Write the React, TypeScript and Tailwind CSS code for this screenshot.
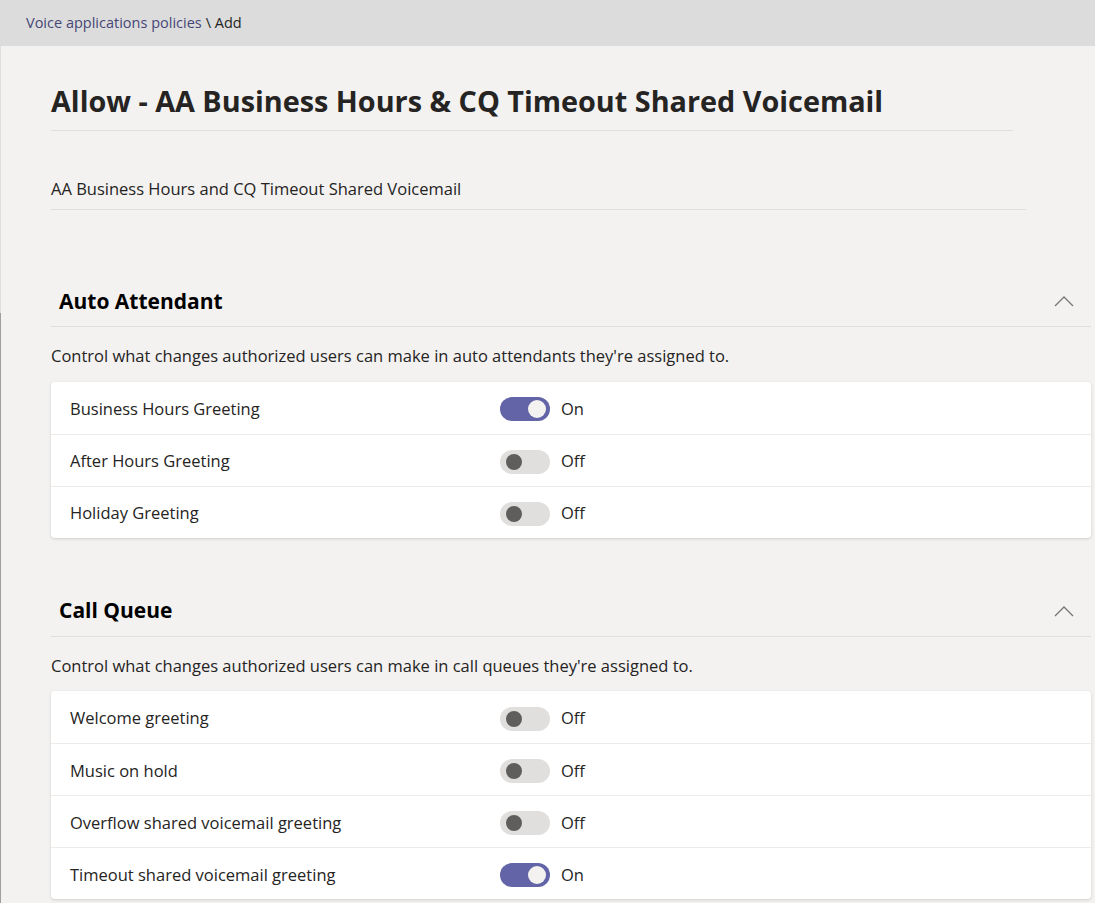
type Setting = { label: string; on: boolean };

const autoAttendant: Setting[] = [
  { label: "Business Hours Greeting", on: true },
  { label: "After Hours Greeting", on: false },
  { label: "Holiday Greeting", on: false },
];

const callQueue: Setting[] = [
  { label: "Welcome greeting", on: false },
  { label: "Music on hold", on: false },
  { label: "Overflow shared voicemail greeting", on: false },
  { label: "Timeout shared voicemail greeting", on: true },
];

function Chevron() {
  return (
    <svg width="20" height="11" viewBox="0 0 20 11" fill="none" className="text-[#797775]">
      <path d="M1 10 L10 1 L19 10" stroke="currentColor" strokeWidth="1.3" />
    </svg>
  );
}

function Toggle({ on }: { on: boolean }) {
  return (
    <div className="flex items-center gap-[11px]">
      {on ? (
        <div className="flex h-[24px] w-[50px] items-center justify-end rounded-full bg-[#6264a7] pr-[4px]">
          <div className="h-[18px] w-[18px] rounded-full bg-[#f3f2f1]" />
        </div>
      ) : (
        <div className="flex h-[24px] w-[50px] items-center rounded-full bg-[#e1dfdd] pl-[6px]">
          <div className="h-[16px] w-[16px] rounded-full bg-[#605e5c]" />
        </div>
      )}
      <span className="text-[16.5px] text-[#252423]">{on ? "On" : "Off"}</span>
    </div>
  );
}

function Section({ title, description, items }: { title: string; description: string; items: Setting[] }) {
  return (
    <section>
      <div className="flex h-[50px] items-center justify-between border-b border-[#e1dfdd] pl-[8px] pr-[17px]">
        <h2 className="text-[21px] font-bold text-black">{title}</h2>
        <Chevron />
      </div>
      <p className="mt-[17px] text-[16.5px] text-[#252423]">{description}</p>
      <div className="mt-[13px] rounded-[4px] bg-white shadow-[0_1px_3px_rgba(0,0,0,0.15)]">
        {items.map((item, i) => (
          <div
            key={item.label}
            className={`flex h-[52px] items-center pl-[19px] pt-[3px] ${i > 0 ? "border-t border-[#edebe9]" : ""}`}
          >
            <span className="w-[430px] text-[16.5px] text-[#252423]">{item.label}</span>
            <Toggle on={item.on} />
          </div>
        ))}
      </div>
    </section>
  );
}

export default function App() {
  return (
    <div className="flex min-h-screen flex-col bg-[#f3f2f1] font-['Open_Sans','Noto_Sans',sans-serif]">
      <header className="flex h-[46px] items-center bg-[#dcdcdc] px-[26px] text-[14.5px]">
        <span className="text-[#464775]">Voice applications policies</span>
        <span className="ml-[4px] text-[#252423]">\ Add</span>
      </header>

      <div className="flex flex-1">
        <div className="flex w-[1px] flex-col">
          <div className="h-[267px] bg-[#e1dfdd]" />
          <div className="flex-1 bg-[#a19f9d]" />
        </div>
        <main className="flex-1 pl-[50px] pr-[4px]">
          <h1 className="mr-[78px] border-b border-[#e1dfdd] pb-[12px] pt-[38px] text-[28.8px] font-bold leading-[34px] text-[#252423]">
            Allow - AA Business Hours &amp; CQ Timeout Shared Voicemail
          </h1>
          <div className="mr-[65px] mt-[46px] border-b border-[#e1dfdd] pb-[7px] text-[16.5px] text-[#252423]">
            AA Business Hours and CQ Timeout Shared Voicemail
          </div>

          <div className="mt-[67px] flex flex-col gap-[49px] pb-[4px]">
            <Section
              title="Auto Attendant"
              description="Control what changes authorized users can make in auto attendants they're assigned to."
              items={autoAttendant}
            />
            <Section
              title="Call Queue"
              description="Control what changes authorized users can make in call queues they're assigned to."
              items={callQueue}
            />
          </div>
        </main>
      </div>
    </div>
  );
}
